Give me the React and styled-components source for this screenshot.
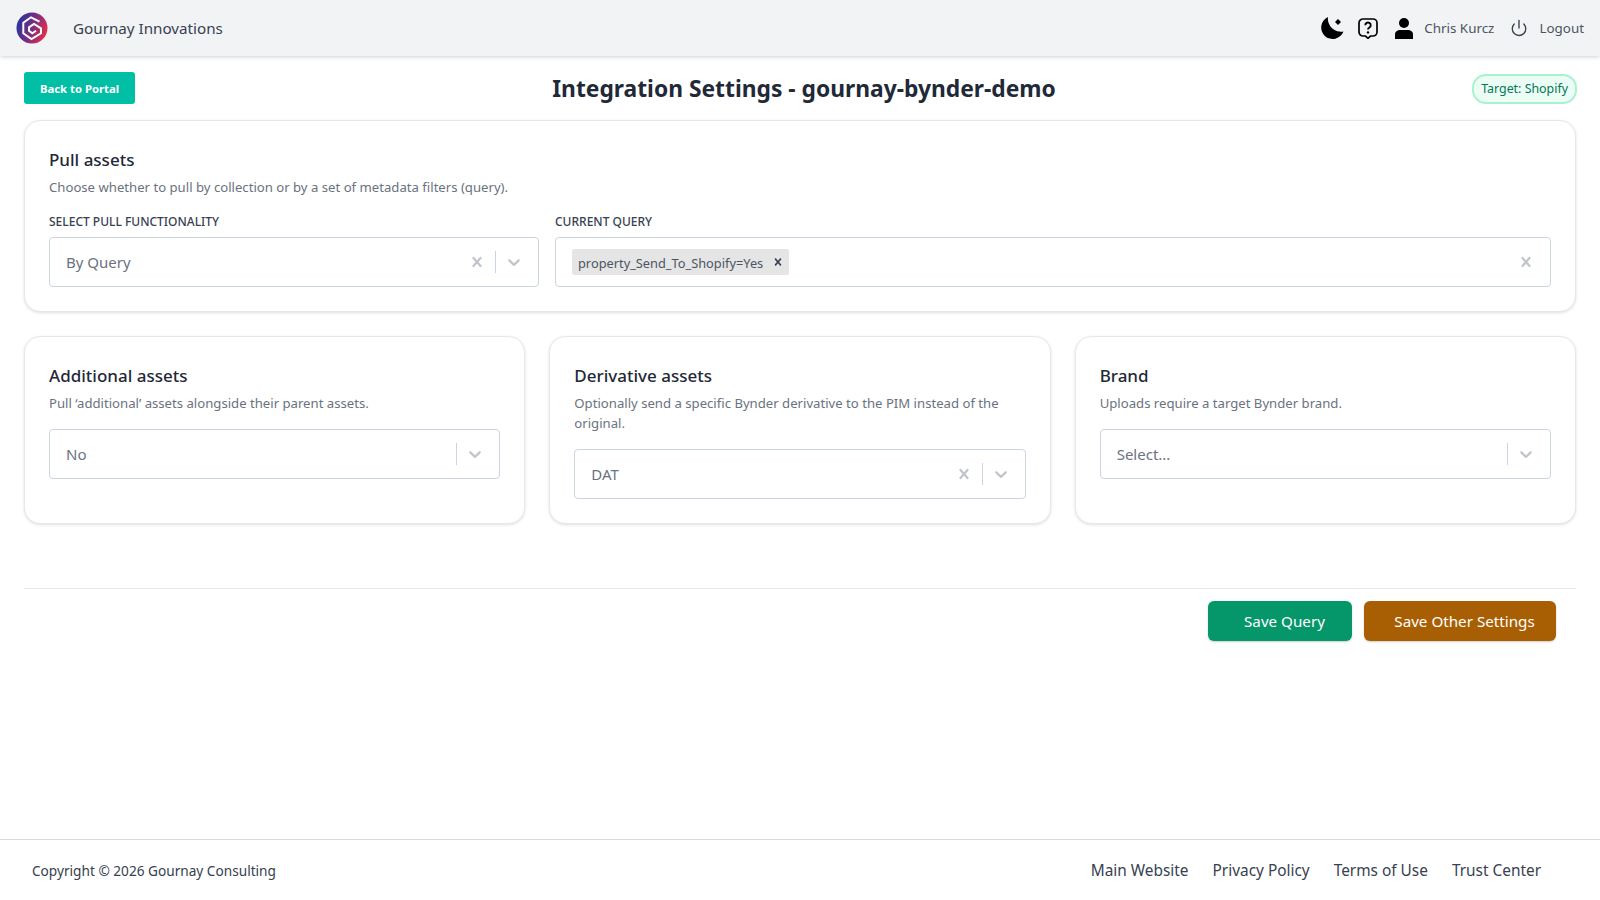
import React from 'react';
import styled, { createGlobalStyle } from 'styled-components';
import { Power } from 'lucide-react';

const GlobalStyle = createGlobalStyle`
  html, body {
    margin: 0;
    padding: 0;
    background: #fff;
  }
  body {
    font-family: "Noto Sans", "Open Sans", sans-serif;
    color: #1f2937;
  }
  * {
    box-sizing: border-box;
  }
`;

const Page = styled.div`
  min-height: 900px;
  display: flex;
  flex-direction: column;
`;

const Navbar = styled.header`
  height: 56px;
  display: flex;
  align-items: center;
  padding: 0 16px;
  background: #f2f3f5;
  box-shadow: 0 1px 4px rgba(0, 0, 0, 0.18);
`;

const Brand = styled.div`
  display: flex;
  align-items: center;
  gap: 24px;
  font-size: 15.2px;
  color: #374151;
`;

const NavRight = styled.div`
  margin-left: auto;
  display: flex;
  align-items: center;
  font-size: 13.4px;
  color: #4b5563;
`;

const NavIcon = styled.svg`
  display: block;
  margin-right: ${(p) => p.$gap}px;
`;

const PowerIcon = styled(Power)`
  display: block;
  margin-right: 11px;
  color: #374151;
`;

const NavLabel = styled.span`
  margin-right: ${(p) => p.$gap || 0}px;
`;

const Main = styled.main`
  flex: 1;
  padding: 16px 24px 0;
`;

const TitleRow = styled.div`
  display: grid;
  grid-template-columns: 1fr auto 1fr;
  align-items: center;
  height: 32px;
  margin-bottom: 16px;
`;

const BackButton = styled.button`
  justify-self: start;
  height: 32px;
  padding: 0 16px;
  border: none;
  border-radius: 3px;
  background: #00bfa5;
  color: #fff;
  font-family: inherit;
  font-size: 11.3px;
  font-weight: 700;
`;

const Title = styled.h1`
  margin: 1px 0 0 8px;
  font-size: 22.8px;
  font-weight: 700;
  color: #1f2937;
`;

const TargetBadge = styled.span`
  justify-self: end;
  margin: 1px -1px 0 0;
  padding: 3px 7px;
  border: 2px solid #a7f3d0;
  border-radius: 14px;
  background: #ecfdf5;
  color: #047857;
  font-size: 12.4px;
  line-height: 20px;
`;

const Card = styled.section`
  padding: 24px;
  border: 1px solid #e5e7eb;
  border-radius: 16px;
  background: #fff;
  box-shadow: 0 1px 3px rgba(0, 0, 0, 0.12);
`;

const CardTitle = styled.h2`
  margin: 3px 0 0;
  font-size: 17px;
  line-height: 24px;
  font-weight: 500;
  color: #1f2937;
`;

const CardText = styled.p`
  margin: 5px 0 0;
  font-size: 13.15px;
  line-height: 20px;
  color: #6b7280;
`;

const FieldRow = styled.div`
  display: grid;
  grid-template-columns: 490px 1fr;
  gap: 16px;
  margin-top: 16px;
`;

const FieldLabel = styled.label`
  display: block;
  margin-bottom: 6px;
  font-size: 12px;
  line-height: 18px;
  font-weight: 500;
  color: #374151;
`;

const SelectBox = styled.div`
  height: 50px;
  display: flex;
  align-items: center;
  margin-top: ${(p) => p.$top || 0}px;
  padding: 0 6px 0 16px;
  border: 1px solid #cbd5e1;
  border-radius: 4px;
  background: #fff;
  font-size: 15px;
  color: #6b7280;
`;

const SelectValue = styled.div`
  flex: 1;
  display: flex;
  align-items: center;
`;

const Chip = styled.span`
  display: flex;
  align-items: center;
  height: 26px;
  padding: 1px 4px 0 6px;
  gap: 8px;
  background: #e5e5e5;
  border-radius: 2px;
  font-size: 12.8px;
  color: #4b5563;
`;

const Divider = styled.span`
  width: 1px;
  height: 22px;
  background: #cbd5e1;
`;

const Indicator = styled.svg`
  display: block;
  width: 36px;
  height: 20px;
  fill: #c2c6cc;
`;

const ChipRemove = styled.svg`
  display: block;
  width: 14px;
  height: 14px;
  margin-top: -1px;
  fill: #374151;
`;

const ThreeCols = styled.div`
  display: grid;
  grid-template-columns: repeat(3, 1fr);
  gap: 24px;
  margin-top: 24px;
`;

const Rule = styled.hr`
  margin: 64px 0 12px;
  border: none;
  border-top: 1px solid #e5e7eb;
`;

const Actions = styled.div`
  display: flex;
  justify-content: flex-end;
  gap: 12px;
  padding-right: 20px;
`;

const ActionButton = styled.button`
  height: 40px;
  width: ${(p) => p.$width}px;
  padding: 0 0 0 9px;
  border: none;
  border-radius: 6px;
  background: ${(p) => p.$bg};
  color: #fff;
  font-family: inherit;
  font-size: 15.2px;
  font-weight: 400;
  box-shadow: 0 1px 2px rgba(0, 0, 0, 0.2);
`;

const Footer = styled.footer`
  height: 61px;
  display: flex;
  align-items: center;
  justify-content: space-between;
  padding: 0 59px 0 32px;
  border-top: 1px solid #d9d9d9;
`;

const Copyright = styled.span`
  font-size: 13.65px;
  color: #374151;
`;

const FooterLinks = styled.nav`
  display: flex;
  gap: 24px;
`;

const FooterLink = styled.a`
  font-size: 15.4px;
  color: #374151;
`;

// same glyphs the select widget draws
const CROSS = 'M14.348 14.849c-0.469 0.469-1.229 0.469-1.697 0l-2.651-3.030-2.651 3.029c-0.469 0.469-1.229 0.469-1.697 0-0.469-0.469-0.469-1.229 0-1.697l2.758-3.15-2.759-3.152c-0.469-0.469-0.469-1.228 0-1.697s1.228-0.469 1.697 0l2.652 3.031 2.651-3.031c0.469-0.469 1.228-0.469 1.697 0s0.469 1.229 0 1.697l-2.758 3.152 2.758 3.15c0.469 0.469 0.469 1.229 0 1.698z';
const CHEVRON = 'M4.516 7.548c0.436-0.446 1.043-0.481 1.576 0l3.908 3.747 3.908-3.747c0.533-0.481 1.141-0.446 1.576 0 0.436 0.445 0.408 1.197 0 1.615-0.406 0.418-4.695 4.502-4.695 4.502-0.217 0.223-0.502 0.335-0.789 0.335s-0.572-0.112-0.79-0.335c0 0-4.287-4.084-4.695-4.502s-0.436-1.17 0-1.615z';

const Logo = () => (
  <svg width="33" height="32" viewBox="0 0 33 32">
    <defs>
      <linearGradient id="logoGrad" x1="0" y1="0.3" x2="1" y2="0.7">
        <stop offset="0" stopColor="#25349c" />
        <stop offset="0.5" stopColor="#7b2d83" />
        <stop offset="1" stopColor="#ee2f45" />
      </linearGradient>
    </defs>
    <circle cx="16" cy="16" r="15.5" fill="url(#logoGrad)" />
    <path d="M23.500 9.700 15 5.300 7.300 10.700V21.300L15.500 27 25 21.300V16.300L18 12 13 15.300V18.700L16.300 21.300 20 18.700" fill="none" stroke="#fff" strokeWidth="2" />
  </svg>
);

const MoonIcon = () => (
  <NavIcon $gap={14} width="24" height="24" viewBox="0 0 24 24">
    <path d="M8 1A11.500 11.500 0 1 0 23.500 15.500 A13 13 0 0 1 8 1Z" fill="#000" />
    <path d="M18 3 21 6 18 9 15 6Z" fill="#000" />
  </NavIcon>
);

const HelpIcon = () => (
  <NavIcon $gap={17} width="20" height="21" viewBox="0 0 20 21">
    <path d="M5 1h10a4 4 0 0 1 4 4v9a4 4 0 0 1-4 4h-2.500L10 20.300 7.500 18H5a4 4 0 0 1-4-4V5a4 4 0 0 1 4-4Z" fill="none" stroke="#000" strokeWidth="1.700" />
    <path d="M7.300 7.200a2.700 2.700 0 1 1 4.100 2.300c-.9.600-1.400 1-1.400 2.100" fill="none" stroke="#000" strokeWidth="1.900" />
    <circle cx="10" cy="14.400" r="1.200" fill="#000" />
  </NavIcon>
);

const UserIcon = () => (
  <NavIcon $gap={11} width="18" height="21" viewBox="0 0 18 21">
    <circle cx="9" cy="5" r="5" fill="#000" />
    <path d="M0 21v-4.500C0 13.500 2.500 12 5 12h8c2.500 0 5 1.500 5 4.500V21Z" fill="#000" />
  </NavIcon>
);

const SelectIcon = ({ d }) => (
  <Indicator viewBox="-8 0 36 20">
    <path d={d} />
  </Indicator>
);

function Select({ value, clearable, top }) {
  return (
    <SelectBox $top={top}>
      <SelectValue>{value}</SelectValue>
      {clearable && <SelectIcon d={CROSS} />}
      <Divider />
      <SelectIcon d={CHEVRON} />
    </SelectBox>
  );
}

export default function App() {
  return (
    <Page>
      <GlobalStyle />
      <Navbar>
        <Brand>
          <Logo />
          Gournay Innovations
        </Brand>
        <NavRight>
          <MoonIcon />
          <HelpIcon />
          <UserIcon />
          <NavLabel $gap={16}>Chris Kurcz</NavLabel>
          <PowerIcon size={18} strokeWidth={1.8} />
          <NavLabel>Logout</NavLabel>
        </NavRight>
      </Navbar>
      <Main>
        <TitleRow>
          <BackButton>Back to Portal</BackButton>
          <Title>Integration Settings - gournay-bynder-demo</Title>
          <TargetBadge>Target: Shopify</TargetBadge>
        </TitleRow>
        <Card>
          <CardTitle>Pull assets</CardTitle>
          <CardText>Choose whether to pull by collection or by a set of metadata filters (query).</CardText>
          <FieldRow>
            <div>
              <FieldLabel>SELECT PULL FUNCTIONALITY</FieldLabel>
              <Select value="By Query" clearable />
            </div>
            <div>
              <FieldLabel>CURRENT QUERY</FieldLabel>
              <SelectBox>
                <SelectValue>
                  <Chip>
                    property_Send_To_Shopify=Yes
                    <ChipRemove viewBox="0 0 20 20">
                      <path d={CROSS} />
                    </ChipRemove>
                  </Chip>
                </SelectValue>
                <SelectIcon d={CROSS} />
              </SelectBox>
            </div>
          </FieldRow>
        </Card>
        <ThreeCols>
          <Card>
            <CardTitle>Additional assets</CardTitle>
            <CardText>Pull ‘additional’ assets alongside their parent assets.</CardText>
            <Select value="No" top={16} />
          </Card>
          <Card>
            <CardTitle>Derivative assets</CardTitle>
            <CardText>Optionally send a specific Bynder derivative to the PIM instead of the original.</CardText>
            <Select value="DAT" clearable top={16} />
          </Card>
          <Card>
            <CardTitle>Brand</CardTitle>
            <CardText>Uploads require a target Bynder brand.</CardText>
            <Select value="Select..." top={16} />
          </Card>
        </ThreeCols>
        <Rule />
        <Actions>
          <ActionButton $bg="#059669" $width={144}>Save Query</ActionButton>
          <ActionButton $bg="#a85f03" $width={192}>Save Other Settings</ActionButton>
        </Actions>
      </Main>
      <Footer>
        <Copyright>Copyright © 2026 Gournay Consulting</Copyright>
        <FooterLinks>
          <FooterLink>Main Website</FooterLink>
          <FooterLink>Privacy Policy</FooterLink>
          <FooterLink>Terms of Use</FooterLink>
          <FooterLink>Trust Center</FooterLink>
        </FooterLinks>
      </Footer>
    </Page>
  );
}
